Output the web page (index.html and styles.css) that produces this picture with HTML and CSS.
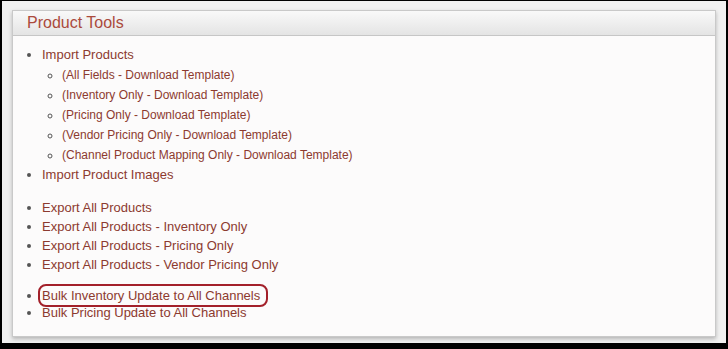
FILE: index.html
```html
<!DOCTYPE html>
<html lang="en">
<head>
    <meta charset="UTF-8">
    <meta name="viewport" content="width=device-width, initial-scale=1.0">
    <title>Product Tools</title>
    <link rel="stylesheet" href="styles.css">
</head>
<body>
    <div class="frame">
        <div class="panel">
            <div class="panel-header">
                <h2>Product Tools</h2>
            </div>
            <div class="panel-body">
                <ul class="group group-import">
                    <li>
                        <a href="#">Import Products</a>
                        <ul class="sub">
                            <li><a href="#">(All Fields - Download Template)</a></li>
                            <li><a href="#">(Inventory Only - Download Template)</a></li>
                            <li><a href="#">(Pricing Only - Download Template)</a></li>
                            <li><a href="#">(Vendor Pricing Only - Download Template)</a></li>
                            <li><a href="#">(Channel Product Mapping Only - Download Template)</a></li>
                        </ul>
                    </li>
                    <li><a href="#">Import Product Images</a></li>
                </ul>
                <ul class="group group-export">
                    <li><a href="#">Export All Products</a></li>
                    <li><a href="#">Export All Products - Inventory Only</a></li>
                    <li><a href="#">Export All Products - Pricing Only</a></li>
                    <li><a href="#">Export All Products - Vendor Pricing Only</a></li>
                </ul>
                <ul class="group group-bulk">
                    <li><a href="#" class="highlight">Bulk Inventory Update to All Channels</a></li>
                    <li><a href="#">Bulk Pricing Update to All Channels</a></li>
                </ul>
            </div>
        </div>
    </div>
</body>
</html>
```
FILE: styles.css
```css
html, body {
    margin: 0;
    height: 100%;
}
body {
    background-color: #000;
    font-family: "Liberation Sans", Arial, Helvetica, sans-serif;
    padding: 1px 2px 6px 2px;
    box-sizing: border-box;
}
.frame {
    background-color: #f1f1f1;
    height: 100%;
    padding: 9px 10px 0 10px;
    box-sizing: border-box;
}
.panel {
    background-color: #fcfbfb;
    border: 1px solid #c9c9c9;
    box-shadow: 0 2px 4px rgba(0, 0, 0, 0.25);
}
.panel-header {
    height: 24px;
    background: linear-gradient(#f9f9f9, #e4e4e4);
    border-bottom: 1px solid #c6c6c6;
}
h2 {
    margin: 0;
    padding-left: 14px;
    font-size: 16px;
    font-weight: normal;
    line-height: 23px;
    color: #ab4a3c;
}
.panel-body {
    padding: 9px 0 15px 0;
}
a {
    color: #8c3a2f;
    text-decoration: none;
}
.group {
    margin: 0;
    padding-left: 29px;
    font-size: 13px;
    color: #555;
}
.group-import li {
    line-height: 20px;
}
.group-export {
    margin-top: 13px;
}
.group-export li {
    line-height: 19px;
}
.group-bulk {
    margin-top: 13px;
}
.group-bulk li {
    line-height: 17px;
}
.sub {
    margin: 0;
    padding-left: 20px;
    font-size: 12px;
    list-style-type: circle;
}
.highlight {
    margin-left: -4px;
    padding: 2px 6px 2px 2px;
    border: 2px solid #a3202a;
    border-radius: 8px;
}
```
